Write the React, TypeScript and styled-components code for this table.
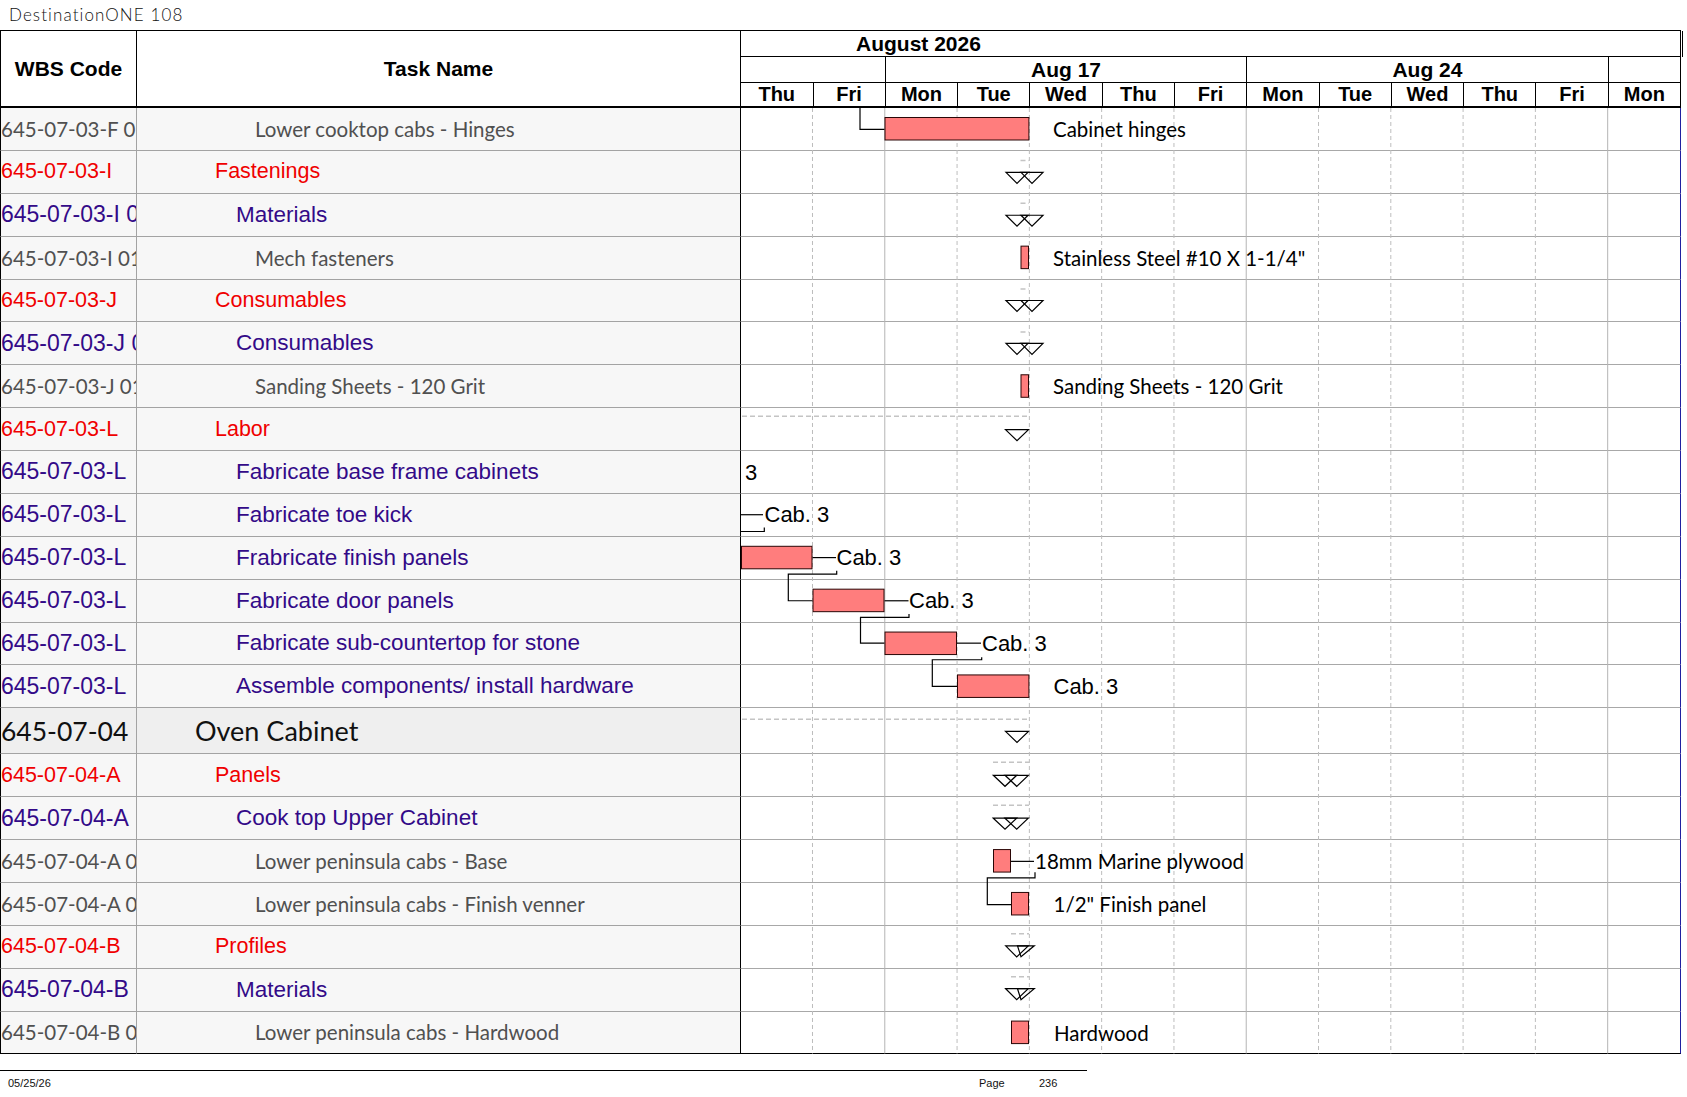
import styled, { createGlobalStyle } from 'styled-components';

const GlobalStyle = createGlobalStyle`
  html, body {
    margin: 0;
    padding: 0;
    background: #fff;
  }
  body {
    font-family: "Liberation Sans", Arial, sans-serif;
    color: #000;
  }
  * {
    box-sizing: border-box;
  }
`;

type Level = 'section' | 'group' | 'phase' | 'item';

interface Task {
  wbs: string;
  name: string;
  level: Level;
}

const ARIAL = '"Liberation Sans", Arial, sans-serif';
const CALIBRI = 'Lato, "Open Sans", "Liberation Sans", sans-serif';

const tones: Record<Level, { font: string; wbsSize: number; nameSize: number; color: string; indent: number; bg: string }> = {
  section: { font: CALIBRI, wbsSize: 26.5, nameSize: 27, color: '#111', indent: 58, bg: '#efefef' },
  group: { font: ARIAL, wbsSize: 21.5, nameSize: 21.5, color: '#f00000', indent: 78, bg: '#f7f7f7' },
  phase: { font: ARIAL, wbsSize: 23, nameSize: 22.5, color: '#330a88', indent: 99, bg: '#f7f7f7' },
  item: { font: CALIBRI, wbsSize: 20.5, nameSize: 20.5, color: '#505050', indent: 118, bg: '#f7f7f7' },
};

const rows: Task[] = [
  { wbs: '645-07-03-F 01', name: 'Lower cooktop cabs - Hinges', level: 'item' },
  { wbs: '645-07-03-I', name: 'Fastenings', level: 'group' },
  { wbs: '645-07-03-I 01', name: 'Materials', level: 'phase' },
  { wbs: '645-07-03-I 01', name: 'Mech fasteners', level: 'item' },
  { wbs: '645-07-03-J', name: 'Consumables', level: 'group' },
  { wbs: '645-07-03-J 01', name: 'Consumables', level: 'phase' },
  { wbs: '645-07-03-J 01', name: 'Sanding Sheets - 120 Grit', level: 'item' },
  { wbs: '645-07-03-L', name: 'Labor', level: 'group' },
  { wbs: '645-07-03-L', name: 'Fabricate base frame cabinets', level: 'phase' },
  { wbs: '645-07-03-L', name: 'Fabricate toe kick', level: 'phase' },
  { wbs: '645-07-03-L', name: 'Frabricate finish panels', level: 'phase' },
  { wbs: '645-07-03-L', name: 'Fabricate door panels', level: 'phase' },
  { wbs: '645-07-03-L', name: 'Fabricate sub-countertop for stone', level: 'phase' },
  { wbs: '645-07-03-L', name: 'Assemble components/ install hardware', level: 'phase' },
  { wbs: '645-07-04', name: 'Oven Cabinet', level: 'section' },
  { wbs: '645-07-04-A', name: 'Panels', level: 'group' },
  { wbs: '645-07-04-A', name: 'Cook top Upper Cabinet', level: 'phase' },
  { wbs: '645-07-04-A 01', name: 'Lower peninsula cabs - Base', level: 'item' },
  { wbs: '645-07-04-A 02', name: 'Lower peninsula cabs - Finish venner', level: 'item' },
  { wbs: '645-07-04-B', name: 'Profiles', level: 'group' },
  { wbs: '645-07-04-B', name: 'Materials', level: 'phase' },
  { wbs: '645-07-04-B 01', name: 'Lower peninsula cabs - Hardwood', level: 'item' },
];

const days = ['Thu', 'Fri', 'Mon', 'Tue', 'Wed', 'Thu', 'Fri', 'Mon', 'Tue', 'Wed', 'Thu', 'Fri', 'Mon'];
const weeks = [
  { label: '', span: 2 },
  { label: 'Aug 17', span: 5 },
  { label: 'Aug 24', span: 5 },
  { label: '', span: 1 },
];

// geometry of the chart, in page pixels
const CHART_LEFT = 741;
const CHART_W = 939;
const X0 = 740.2;
const DAY = 72.29;
const ROW_H = 42.88;
const SECTION_H = 46;

const rowHeights = rows.map((r) => (r.level === 'section' ? SECTION_H : ROW_H));
const rowTops: number[] = [];
rowHeights.forEach((h, i) => rowTops.push(i === 0 ? 0 : rowTops[i - 1] + rowHeights[i - 1]));
const bodyHeight = rowTops[rowTops.length - 1] + rowHeights[rowHeights.length - 1];
const y = (row: number, off: number) => rowTops[row] + off;

const bars = [
  { row: 0, x1: 884.5, x2: 1029.4 },
  { row: 3, x1: 1020.5, x2: 1029 },
  { row: 6, x1: 1020.5, x2: 1029 },
  { row: 10, x1: 741, x2: 812.5 },
  { row: 11, x1: 812.5, x2: 884.5 },
  { row: 12, x1: 884.5, x2: 957 },
  { row: 13, x1: 957, x2: 1029.4 },
  { row: 17, x1: 993, x2: 1011 },
  { row: 18, x1: 1011, x2: 1029 },
  { row: 21, x1: 1011, x2: 1029 },
];

const summaries = [
  { row: 1, x1: 1020.5, x2: 1029, off: 9.5 },
  { row: 2, x1: 1020.5, x2: 1029, off: 9.5 },
  { row: 4, x1: 1020.5, x2: 1029, off: 9.5 },
  { row: 5, x1: 1020.5, x2: 1029, off: 9.5 },
  { row: 7, x1: 742, x2: 1029, off: 8 },
  { row: 14, x1: 742, x2: 1029, off: 11 },
  { row: 15, x1: 993, x2: 1029, off: 8 },
  { row: 16, x1: 993, x2: 1029, off: 8 },
  { row: 19, x1: 1011, x2: 1029, off: 8 },
  { row: 20, x1: 1011, x2: 1029, off: 8 },
];

const pairA = [[1006, 1017, 1028], [1021, 1032, 1043]];
const pairB = [[993.3, 1005, 1016.7], [1005, 1016.7, 1028.3]];
const pairC = [[1005.7, 1016.7, 1028.3], [1017.5, 1021, 1034.3]];
const single = [[1005.5, 1017, 1028.5]];

const markers = [
  { row: 1, tris: pairA, top: 21.5 },
  { row: 2, tris: pairA, top: 21.5 },
  { row: 4, tris: pairA, top: 21 },
  { row: 5, tris: pairA, top: 21 },
  { row: 7, tris: single, top: 21.5 },
  { row: 14, tris: single, top: 23 },
  { row: 15, tris: pairB, top: 21 },
  { row: 16, tris: pairB, top: 21 },
  { row: 19, tris: pairC, top: 20 },
  { row: 20, tris: pairC, top: 20 },
];

type Pt = [number, number, number];
const links: Pt[][] = [
  [[860, 0, 0], [860, 0, 21.3], [884.5, 0, 21.3]],
  [[741, 9, 20.8], [763, 9, 20.8]],
  [[741, 9, 37.6], [764.3, 9, 37.6], [764.3, 9, 33.6]],
  [[812.5, 10, 20.8], [836, 10, 20.8]],
  [[836.7, 10, 34], [836.7, 10, 37.3], [788.3, 10, 37.3], [788.3, 11, 21.1], [812.5, 11, 21.1]],
  [[884.5, 11, 21.1], [908.5, 11, 21.1]],
  [[909, 11, 34.4], [909, 11, 37.7], [860.5, 11, 37.7], [860.5, 12, 20.6], [884.5, 12, 20.6]],
  [[957, 12, 20.6], [981, 12, 20.6]],
  [[981.7, 12, 34.8], [981.7, 12, 37.2], [932.3, 12, 37.2], [932.3, 13, 20.9], [957, 13, 20.9]],
  [[1011, 17, 21.3], [1034, 17, 21.3]],
  [[1035, 17, 32.3], [1035, 17, 37.8], [987.3, 17, 37.8], [987.3, 18, 21.7], [1011, 18, 21.7]],
];

const labels = [
  { row: 0, x: 1053, text: 'Cabinet hinges', arial: false },
  { row: 3, x: 1053, text: 'Stainless Steel #10 X 1-1/4"', arial: false },
  { row: 6, x: 1053, text: 'Sanding Sheets - 120 Grit', arial: false },
  { row: 8, x: 745, text: '3', arial: true },
  { row: 9, x: 764.5, text: 'Cab. 3', arial: true },
  { row: 10, x: 836.5, text: 'Cab. 3', arial: true },
  { row: 11, x: 909, text: 'Cab. 3', arial: true },
  { row: 12, x: 982, text: 'Cab. 3', arial: true },
  { row: 13, x: 1053.5, text: 'Cab. 3', arial: true },
  { row: 17, x: 1035, text: '18mm Marine plywood', arial: false },
  { row: 18, x: 1053.5, text: '1/2" Finish panel', arial: false },
  { row: 21, x: 1054, text: 'Hardwood', arial: false },
];

const Page = styled.div`
  width: 1687px;
  min-height: 1097px;
  background: #fff;
`;

const DocTitle = styled.div`
  height: 30px;
  line-height: 30px;
  padding-left: 9px;
  font-family: ${CALIBRI};
  font-weight: 300;
  font-size: 17px;
  letter-spacing: 1.1px;
  color: #111;
`;

const Sheet = styled.div`
  width: 1681px;
`;

const Header = styled.div`
  display: flex;
  height: 78px;
  border-top: 1px solid #000;
  border-bottom: 2px solid #000;
`;

const HeadCell = styled.div<{ $w: number; $first?: boolean }>`
  width: ${(p) => p.$w}px;
  display: flex;
  align-items: center;
  justify-content: center;
  border-right: 1px solid #000;
  border-left: ${(p) => (p.$first ? '1px solid #000' : 'none')};
  font-weight: bold;
  font-size: 21px;
`;

const Timescale = styled.div`
  width: 940px;
  display: flex;
  flex-direction: column;
  border-right: 1px solid #000;
`;

const MonthRow = styled.div`
  position: relative;
  height: 26px;
  border-bottom: 1px solid #000;
  padding-left: 115px;
  font-weight: bold;
  font-size: 21px;
  line-height: 25px;

  &::after {
    content: '';
    position: absolute;
    top: 0;
    bottom: -1px;
    right: -3px;
    width: 1px;
    background: #000;
  }
`;

const ScaleGrid = styled.div<{ $h: number; $ruled?: boolean }>`
  display: grid;
  grid-template-columns: 71.5px repeat(12, 1fr);
  height: ${(p) => p.$h}px;
  border-bottom: ${(p) => (p.$ruled ? '1px solid #000' : 'none')};
`;

const WeekCell = styled.div<{ $span: number; $first?: boolean }>`
  grid-column: span ${(p) => p.$span};
  border-left: ${(p) => (p.$first ? 'none' : '1px solid #000')};
  text-align: center;
  font-weight: bold;
  font-size: 21px;
  line-height: 25px;
`;

const DayCell = styled.div<{ $first?: boolean }>`
  border-left: ${(p) => (p.$first ? 'none' : '1px solid #000')};
  text-align: center;
  font-weight: bold;
  font-size: 20px;
  line-height: 23px;
`;

const Body = styled.div`
  position: relative;
`;

const Row = styled.div<{ $h: number }>`
  display: flex;
  height: ${(p) => p.$h}px;
`;

const WbsCell = styled.div<{ $level: Level; $last: boolean }>`
  width: 137px;
  display: flex;
  align-items: center;
  overflow: hidden;
  white-space: nowrap;
  padding-left: 0;
  border-left: 1px solid #000;
  border-right: 1px solid #a3a3a3;
  border-bottom: 1px solid ${(p) => (p.$last ? '#000' : '#a3a3a3')};
  background: ${(p) => tones[p.$level].bg};
  font-family: ${(p) => tones[p.$level].font};
  font-size: ${(p) => tones[p.$level].wbsSize}px;
  color: ${(p) => tones[p.$level].color};
`;

const NameCell = styled.div<{ $level: Level; $last: boolean }>`
  width: 604px;
  display: flex;
  align-items: center;
  overflow: hidden;
  white-space: nowrap;
  padding-left: ${(p) => tones[p.$level].indent}px;
  border-right: 1px solid #000;
  border-bottom: 1px solid ${(p) => (p.$last ? '#000' : '#a3a3a3')};
  background: ${(p) => tones[p.$level].bg};
  font-family: ${(p) => tones[p.$level].font};
  font-size: ${(p) => tones[p.$level].nameSize}px;
  color: ${(p) => tones[p.$level].color};
`;

const ChartCell = styled.div<{ $last: boolean }>`
  width: 940px;
  background: #fff;
  border-right: 1px solid #1f1fa0;
  border-bottom: 1px solid ${(p) => (p.$last ? '#000' : '#a8a8a8')};
`;

const GanttLayer = styled.svg`
  position: absolute;
  top: 0;
  left: ${CHART_LEFT}px;
  overflow: visible;
  pointer-events: none;
`;

const Footer = styled.div`
  width: 1087px;
  margin-top: 16px;
  border-top: 1px solid #000;
  display: grid;
  grid-template-columns: 971px 60px auto;
  padding-left: 8px;
  height: 25px;
  line-height: 24px;
  font-size: 11px;
  color: #111;
`;

function Gantt() {
  const path = (pts: Pt[]) =>
    pts.map(([x, r, off], i) => `${i === 0 ? 'M' : 'L'}${x} ${y(r, off)}`).join(' ');

  return (
    <GanttLayer
      width={CHART_W}
      height={bodyHeight}
      viewBox={`${CHART_LEFT} 0 ${CHART_W} ${bodyHeight}`}
    >
      {days.slice(1).map((d, i) => {
        const k = i + 1;
        const x = X0 + DAY * k;
        return d === 'Mon' ? (
          <line key={k} x1={x} x2={x} y1={0} y2={bodyHeight - 1} stroke="#b4b4b4" strokeWidth={1} />
        ) : (
          <line key={k} x1={x} x2={x} y1={0} y2={bodyHeight - 1} stroke="#bdbdbd" strokeWidth={1} strokeDasharray="4 3" />
        );
      })}

      {summaries.map((s, i) => (
        <line
          key={i}
          x1={s.x1}
          x2={s.x2}
          y1={y(s.row, s.off)}
          y2={y(s.row, s.off)}
          stroke="#c4c4c4"
          strokeWidth={1.5}
          strokeDasharray="5 3"
        />
      ))}

      {markers.map((m) =>
        m.tris.map(([l, a, r], j) => (
          <polygon
            key={`${m.row}-${j}`}
            points={`${l},${y(m.row, m.top)} ${a},${y(m.row, m.top + 11)} ${r},${y(m.row, m.top)}`}
            fill="none"
            stroke="#000"
            strokeWidth={1.2}
          />
        ))
      )}

      {links.map((pts, i) => (
        <path key={i} d={path(pts)} fill="none" stroke="#000" strokeWidth={1.2} />
      ))}

      {bars.map((b, i) => (
        <rect
          key={i}
          x={b.x1 + 0.5}
          y={y(b.row, 9.5)}
          width={b.x2 - b.x1 - 1}
          height={22.5}
          fill="#ff7d7d"
          stroke="#2a0606"
          strokeWidth={1}
        />
      ))}

      {labels.map((l, i) => (
        <text
          key={i}
          x={l.x}
          y={y(l.row, l.arial ? 28.5 : 29)}
          fontFamily={l.arial ? ARIAL : CALIBRI}
          fontSize={l.arial ? 22 : 20.5}
          fill="#000"
        >
          {l.text}
        </text>
      ))}
    </GanttLayer>
  );
}

export default function App() {
  return (
    <Page>
      <GlobalStyle />
      <DocTitle>DestinationONE 108</DocTitle>
      <Sheet>
        <Header>
          <HeadCell $w={137} $first>WBS Code</HeadCell>
          <HeadCell $w={604}>Task Name</HeadCell>
          <Timescale>
            <MonthRow>August 2026</MonthRow>
            <ScaleGrid $h={26} $ruled>
              {weeks.map((w, i) => (
                <WeekCell key={i} $span={w.span} $first={i === 0}>
                  {w.label}
                </WeekCell>
              ))}
            </ScaleGrid>
            <ScaleGrid $h={23}>
              {days.map((d, i) => (
                <DayCell key={i} $first={i === 0}>
                  {d}
                </DayCell>
              ))}
            </ScaleGrid>
          </Timescale>
        </Header>
        <Body>
          {rows.map((r, i) => {
            const last = i === rows.length - 1;
            return (
              <Row key={i} $h={rowHeights[i]}>
                <WbsCell $level={r.level} $last={last}>{r.wbs}</WbsCell>
                <NameCell $level={r.level} $last={last}>{r.name}</NameCell>
                <ChartCell $last={last} />
              </Row>
            );
          })}
          <Gantt />
        </Body>
      </Sheet>
      <Footer>
        <span>05/25/26</span>
        <span>Page</span>
        <span>236</span>
      </Footer>
    </Page>
  );
}
